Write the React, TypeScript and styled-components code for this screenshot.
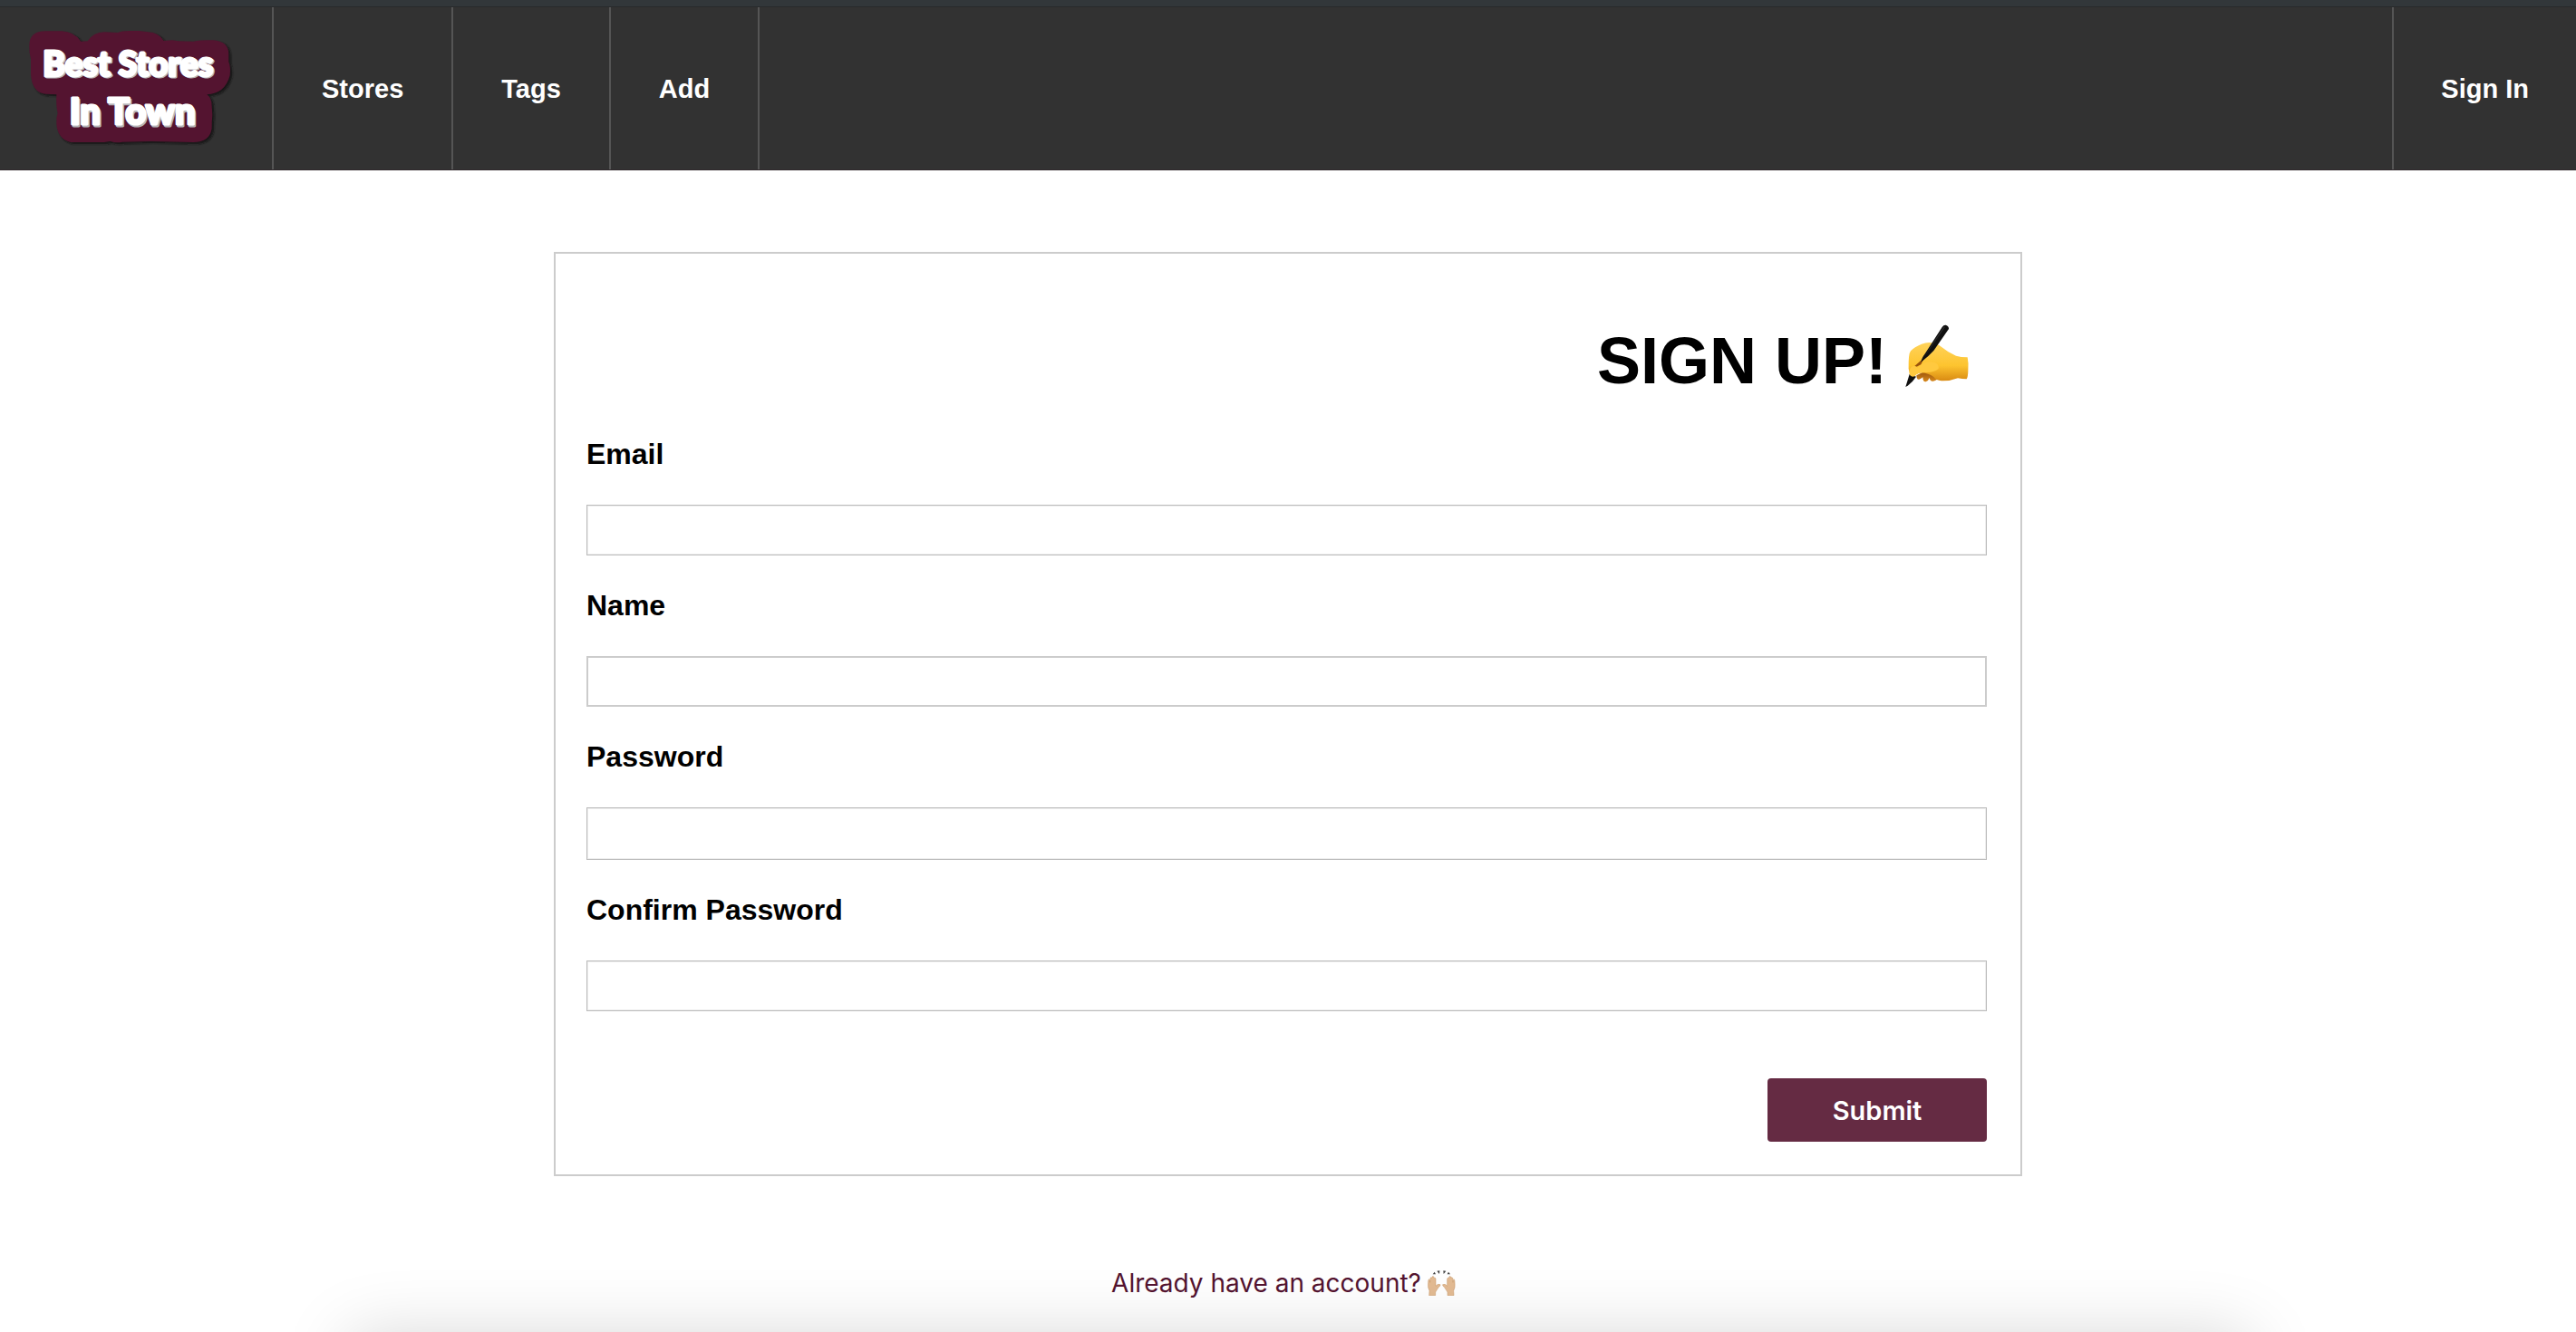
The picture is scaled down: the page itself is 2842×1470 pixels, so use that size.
import React from "react";
import styled, { createGlobalStyle } from "styled-components";

const GlobalStyle = createGlobalStyle`
  *, *::before, *::after {
    box-sizing: border-box;
  }
  body {
    margin: 0;
    background: #fff;
    color: #000;
    font-family: "Liberation Sans", Arial, sans-serif;
  }
`;

const Page = styled.div`
  display: flex;
  flex-direction: column;
  min-height: 100vh;
`;

const Header = styled.header`
  display: flex;
  justify-content: space-between;
  height: 188px;
  background: #323232;
  border-top: 7px solid #32373a;
  border-bottom: 1px solid #30292c;
  box-shadow: inset 0 1px 0 #27292b;
`;

const NavGroup = styled.nav`
  display: flex;
  padding-top: 1px;
`;

const LogoLink = styled.a`
  display: flex;
  align-items: center;
  width: 302px;
  padding-left: 30px;
  border-right: 2px solid #555;
`;

const NavLink = styled.a<{ $side?: "left" | "right" }>`
  display: flex;
  align-items: center;
  padding: 0 ${(p) => (p.$side === "left" ? 52 : 53)}px;
  border-${(p) => p.$side ?? "right"}: 2px solid #555;
  color: #fff;
  font-size: 29px;
  font-weight: 700;
  line-height: 36px;
  text-decoration: none;
`;

const LogoText = styled.text<{ $size: number }>`
  font-family: Lato, "Liberation Sans", sans-serif;
  font-weight: 900;
  font-size: ${(p) => p.$size}px;
  stroke-width: 9px;
  stroke-linejoin: round;
`;

const Main = styled.main`
  display: flex;
  flex-direction: column;
  align-items: center;
  padding: 90px 40px 0;
`;

const Card = styled.form`
  display: flex;
  flex-direction: column;
  width: 100%;
  max-width: 1620px;
  padding: 78px 37px 36px 34px;
  border: 2px solid #ccc;
`;

const Title = styled.h1`
  display: flex;
  justify-content: flex-end;
  align-items: flex-start;
  gap: 20px;
  margin: 0 18px 43px 0;
  font-size: 72px;
  line-height: 80px;
`;

const Fields = styled.div`
  display: flex;
  flex-direction: column;
  gap: 35px;
`;

const Field = styled.div`
  display: flex;
  flex-direction: column;
  gap: 36px;
`;

const Label = styled.label`
  font-size: 32px;
  font-weight: 700;
  line-height: 40px;
`;

const Input = styled.input`
  width: 100%;
  height: ${(p) => (p.name === "password" ? 58 : 56)}px;
  padding: 4px 12px;
  border: 2px solid #ccc;
  border-radius: 0;
  background: #fff;
  font: 28px "Liberation Sans", Arial, sans-serif;
  outline: none;

  &[type="email"],
  &[type="password"] {
    border: 1px solid #bbb;
    box-shadow: inset 0 0 0 1px #eee;
  }
`;

const Submit = styled.button`
  align-self: flex-end;
  width: 242px;
  height: 70px;
  margin-top: 74px;
  padding: 0;
  border: 0;
  border-radius: 4px;
  background: #652b43;
  color: #fff;
  font: 600 29px Inter, sans-serif;
`;

const AccountLink = styled.a`
  display: flex;
  align-items: center;
  gap: 7px;
  margin: 98px 0 34px;
  padding-right: 10px;
  color: #541430;
  font: 28px/40px Inter, sans-serif;
  text-decoration: none;
`;

const BottomShade = styled.div`
  position: fixed;
  right: 12.7%;
  bottom: -205px;
  left: 13.6%;
  height: 200px;
  box-shadow: 0 0 76px rgba(0, 0, 0, 0.17);
  pointer-events: none;
`;

const BADGE =
  "M97 150Q97 103 150 103L205 103Q245 105 268 137L290 136Q310 106 345 106L390 108Q400 102 430 102L460 102L490 106Q525 108 542 135L570 133L590 136L640 137Q665 132 705 133Q757 137 757 180L757 205Q764 220 761 250Q745 310 685 313Q701 325 701 350L703 380Q701 400 701 425Q695 470 640 471L500 468L405 470Q385 475 365 468L345 471L235 471Q190 460 187 410Q185 390 191 375Q185 350 187 313L150 311Q105 305 102 245L102 195Q96 175 97 150Z";

function Logo() {
  return (
    <svg width="230" height="132" viewBox="90 96 690 396" role="img" aria-label="Best Stores In Town">
      <defs>
        <filter id="soft" x="-5%" y="-5%" width="110%" height="110%">
          <feGaussianBlur stdDeviation="2.5" />
        </filter>
      </defs>
      <path d={BADGE} fill="#151515" transform="translate(7 6)" filter="url(#soft)" />
      <path d={BADGE} fill="#541430" />
      <g fill="#b5b5b8" stroke="#b5b5b8" transform="translate(4 4)" aria-hidden="true">
        <LogoText $size={111} x="142" y="252">Best Stores</LogoText>
        <LogoText $size={119} x="230" y="412">In Town</LogoText>
      </g>
      <g fill="#fff" stroke="#fff">
        <LogoText $size={111} x="142" y="252">Best Stores</LogoText>
        <LogoText $size={119} x="230" y="412">In Town</LogoText>
      </g>
    </svg>
  );
}

function WritingHand() {
  return (
    <svg width="72" height="72" viewBox="66 53 216 216" aria-hidden="true">
      <defs>
        <linearGradient id="skin" x1="0" y1="0" x2="0" y2="1">
          <stop offset="0" stopColor="#ffd35a" />
          <stop offset="0.6" stopColor="#fdc42f" />
          <stop offset="1" stopColor="#d98a12" />
        </linearGradient>
        <linearGradient id="finger" x1="0" y1="0" x2="0" y2="1">
          <stop offset="0" stopColor="#8e4a08" />
          <stop offset="1" stopColor="#d98a1c" />
        </linearGradient>
      </defs>
      <path
        d="M103 222Q104 238 112 235Q120 232 124 228Q124 244 134 243Q142 241 146 230Q148 242 158 241Q166 240 170 236L178 218L140 204Z"
        fill="url(#finger)"
      />
      <path
        d="M77 200Q76 150 84 141Q96 128 120 118Q150 107 178 122Q205 144 234 157Q250 162 272 162Q276 180 274 205Q274 225 269 234Q255 234 240 231Q215 241 186 240Q168 238 160 227Q138 210 110 214Q95 224 80 212Z"
        fill="url(#skin)"
      />
      <path d="M96 192Q108 181 128 164L118 186L102 194Z" fill="#99520c" />
      <path d="M188 62Q193 54 200 55Q211 59 210 68L160 140Q142 160 118 178Q120 165 132 149Z" fill="#101010" />
      <path d="M191 64Q194 60 198 61L144 139L128 160Z" fill="#2c2c2c" />
      <path d="M67 260L80 218L102 226Q92 242 74 256Z" fill="#101010" />
      <path
        d="M79 214Q80 192 95 191Q104 190 106 196Q126 178 144 177Q180 178 176 200Q160 214 126 212Q108 213 98 224Q89 229 82 222Z"
        fill="#ffc93f"
      />
    </svg>
  );
}

function RaisedHands() {
  const hand =
    "M45 113L46 97Q40 88 42 70Q42 60 45 59Q48 60 48 70L49 55Q52 51 54 55L55 51Q59 47 61 52L62 56Q66 53 67 58L67 82Q73 73 82 77Q83 82 77 85Q70 96 66 102L66 113Z";
  return (
    <svg width="31" height="28" viewBox="40 30 93 84" aria-hidden="true">
      <g fill="#e3bb93" stroke="#c79767" strokeWidth="1.5">
        <path d={hand} />
        <path d={hand} transform="matrix(-1 0 0 1 172 0)" />
      </g>
      <g fill="#3d3d3d">
        <path d="M57 43L63 35L67 43Z" />
        <path d="M71 32L80 31L79 42Z" />
        <path d="M92 31L101 32L93 42Z" />
        <path d="M105 43L109 35L115 43Z" />
      </g>
    </svg>
  );
}

const NAV = ["Stores", "Tags", "Add"];

const FIELDS = [
  { label: "Email", name: "email", type: "email" },
  { label: "Name", name: "name", type: "text" },
  { label: "Password", name: "password", type: "password" },
  { label: "Confirm Password", name: "password-confirm", type: "password" },
];

export default function App() {
  return (
    <Page>
      <GlobalStyle />
      <Header>
        <NavGroup>
          <LogoLink href="#home">
            <Logo />
          </LogoLink>
          {NAV.map((item) => (
            <NavLink key={item} href={`#${item.toLowerCase()}`}>
              {item}
            </NavLink>
          ))}
        </NavGroup>
        <NavGroup>
          <NavLink href="#signin" $side="left">
            Sign In
          </NavLink>
        </NavGroup>
      </Header>
      <Main>
        <Card onSubmit={(e) => e.preventDefault()}>
          <Title>
            SIGN UP!
            <WritingHand />
          </Title>
          <Fields>
            {FIELDS.map((f) => (
              <Field key={f.name}>
                <Label htmlFor={f.name}>{f.label}</Label>
                <Input id={f.name} name={f.name} type={f.type} />
              </Field>
            ))}
          </Fields>
          <Submit type="submit">Submit</Submit>
        </Card>
        <AccountLink href="#signin">
          Already have an account?
          <RaisedHands />
        </AccountLink>
      </Main>
      <BottomShade />
    </Page>
  );
}
